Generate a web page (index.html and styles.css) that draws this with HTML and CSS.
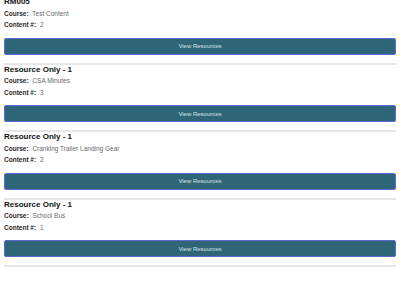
FILE: index.html
```html
<!DOCTYPE html>
<html lang="en">
<head>
  <meta charset="UTF-8" />
  <meta name="viewport" content="width=device-width, initial-scale=1.0"/>
  <title>Resources</title>
  <link rel="stylesheet" href="styles.css">
</head>
<body>
  <div class="resource-list">
    <div class="resource">
      <h3>RM005</h3>
      <div class="row"><span class="label">Course:</span> <span class="value">Test Content</span></div>
      <div class="row"><span class="label">Content #:</span> <span class="value">2</span></div>
      <button class="view-btn">View Resources</button>
    </div>

    <div class="resource">
      <h3>Resource Only - 1</h3>
      <div class="row"><span class="label">Course:</span> <span class="value">CSA Minutes</span></div>
      <div class="row"><span class="label">Content #:</span> <span class="value">3</span></div>
      <button class="view-btn">View Resources</button>
    </div>

    <div class="resource">
      <h3>Resource Only - 1</h3>
      <div class="row"><span class="label">Course:</span> <span class="value">Cranking Trailer Landing Gear</span></div>
      <div class="row"><span class="label">Content #:</span> <span class="value">2</span></div>
      <button class="view-btn">View Resources</button>
    </div>

    <div class="resource">
      <h3>Resource Only - 1</h3>
      <div class="row"><span class="label">Course:</span> <span class="value">School Bus</span></div>
      <div class="row"><span class="label">Content #:</span> <span class="value">1</span></div>
      <button class="view-btn">View Resources</button>
    </div>
  </div>
</body>
</html>
```

FILE: styles.css
```css
:root {
  --text: #1c1c1c;
  --muted: #6b6b6b;
  --btn: #2f6677;
  --btn-border: #5d6ad4;
  --divider: #e6e6e6;
}

body {
  margin: 0;
  background: #ffffff;
  color: var(--text);
  font-family: "Liberation Sans", Arial, sans-serif;
}

.resource-list {
  padding: 0 4px;
  margin-top: -3px;
}

.resource {
  border-bottom: 2px solid var(--divider);
  padding-bottom: 8px;
}

.resource h3 {
  margin: 0;
  font-size: 8px;
  line-height: 10.5px;
  font-weight: bold;
  color: #111;
}

.row {
  font-size: 6.5px;
  line-height: 11.5px;
}

.label {
  font-weight: bold;
  color: #2a2a2a;
  margin-right: 2px;
}

.value {
  color: var(--muted);
}

.view-btn {
  display: block;
  width: 100%;
  height: 17px;
  margin-top: 7px;
  padding: 0;
  background: var(--btn);
  border: 1px solid var(--btn-border);
  border-radius: 2px;
  color: #d9e4e8;
  font-family: "Liberation Sans", Arial, sans-serif;
  font-size: 6px;
  cursor: pointer;
}
```
